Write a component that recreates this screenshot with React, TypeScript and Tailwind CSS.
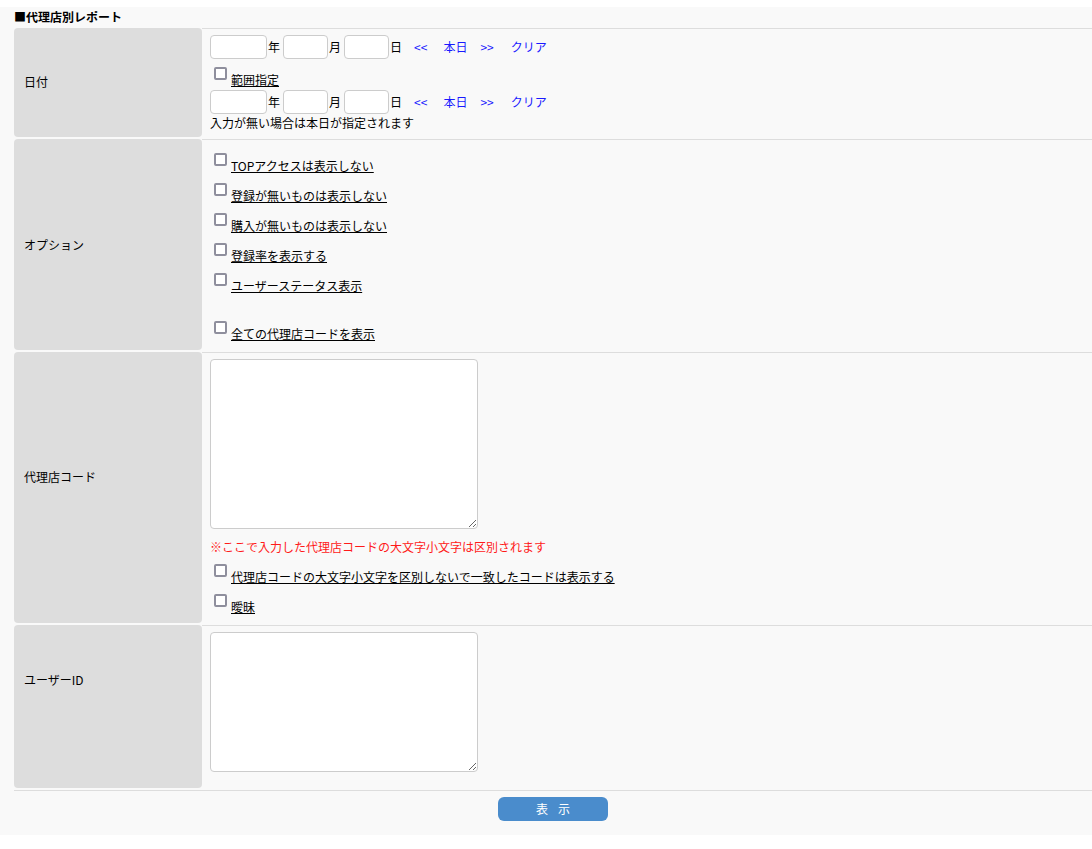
import React from 'react';

const font = "font-['Meiryo','Noto_Sans_CJK_JP','Noto_Sans',sans-serif]";

const Check = ({ label }: { label: string }) => (
    <label className="flex items-start h-[30px]">
        <input
            type="checkbox"
            className="appearance-none w-[13px] h-[13px] mt-[1px] ml-[4px] mr-[4px] border-2 border-[#8f8f9d] rounded-[2px] bg-white shrink-0"
        />
        <span className="underline mt-[5px] leading-[18px]">{label}</span>
    </label>
);

const DateRow = () => (
    <div className="flex items-center h-[24px]">
        <input className="w-[57px] h-[24px] border border-[#cccccc] rounded-[4px] bg-white" />
        <span className="ml-[1px] mr-[3px]">年</span>
        <input className="w-[45px] h-[24px] border border-[#cccccc] rounded-[4px] bg-white" />
        <span className="ml-[1px] mr-[3px]">月</span>
        <input className="w-[45px] h-[24px] border border-[#cccccc] rounded-[4px] bg-white" />
        <span className="ml-[1px]">日</span>
        <a className="ml-[12px] text-[#1a1aff]">&lt;&lt;</a>
        <a className="ml-[16px] text-[#1a1aff]">本日</a>
        <a className="ml-[13px] text-[#1a1aff]">&gt;&gt;</a>
        <a className="ml-[17px] text-[#1a1aff]">クリア</a>
    </div>
);

const Row = ({ label, children, h, pb = 'pb-0' }: { label: string; children: React.ReactNode; h: string; pb?: string }) => (
    <div className={`flex ${h} mb-[2px]`}>
        <div className={`w-[188px] shrink-0 bg-[#dddddd] rounded-[4px] flex items-center pl-[10px] ${pb}`}>{label}</div>
        <div className="flex-1 border-t border-[#dddddd] pl-[8px]">{children}</div>
    </div>
);

const Textarea = ({ h }: { h: string }) => (
    <textarea className={`block w-[268px] ${h} border border-[#cccccc] rounded-[4px] bg-white resize`} />
);

export default function App() {
    return (
        <div className={`${font} text-[12px] text-black bg-white min-h-[849px] pt-[7px]`}>
            <div className="bg-[#f9f9f9] pl-[14px] h-[828px]">
                <div className="font-bold h-[21px] pt-[1px] leading-[18px]">■代理店別レポート</div>

                <Row label="日付" h="h-[109px]" pb="pb-[2px]">
                    <div className="pt-[6px] leading-[18px]">
                        <DateRow />
                        <div className="h-[31px] pt-[7px]">
                            <label className="flex items-start">
                                <input
                                    type="checkbox"
                                    className="appearance-none w-[13px] h-[13px] mt-[1px] ml-[4px] mr-[4px] border-2 border-[#8f8f9d] rounded-[2px] bg-white shrink-0"
                                />
                                <span className="underline mt-[5px]">範囲指定</span>
                            </label>
                        </div>
                        <DateRow />
                        <div>入力が無い場合は本日が指定されます</div>
                    </div>
                </Row>

                <Row label="オプション" h="h-[211px]">
                    <div className="pt-[12px]">
                        <Check label="TOPアクセスは表示しない" />
                        <Check label="登録が無いものは表示しない" />
                        <Check label="購入が無いものは表示しない" />
                        <Check label="登録率を表示する" />
                        <Check label="ユーザーステータス表示" />
                        <div className="h-[18px]" />
                        <Check label="全ての代理店コードを表示" />
                    </div>
                </Row>

                <Row label="代理店コード" h="h-[271px]" pb="pb-[22px]">
                    <div className="pt-[6px]">
                        <Textarea h="h-[170px]" />
                        <div className="text-[#ff1a1a] mt-[9px] leading-[18px]">※ここで入力した代理店コードの大文字小文字は区別されます</div>
                        <div className="mt-[7px]">
                            <Check label="代理店コードの大文字小文字を区別しないで一致したコードは表示する" />
                            <Check label="曖昧" />
                        </div>
                    </div>
                </Row>

                <Row label="ユーザーID" h="h-[163px]" pb="pb-[54px]">
                    <div className="pt-[6px]">
                        <Textarea h="h-[140px]" />
                    </div>
                </Row>

                <div className="border-t border-[#dddddd] flex justify-center pt-[6px]">
                    <button className="w-[110px] h-[24px] bg-[#4a8ccc] text-white rounded-[6px] tracking-[10px] pl-[10px]">表示</button>
                </div>
            </div>
        </div>
    );
}
